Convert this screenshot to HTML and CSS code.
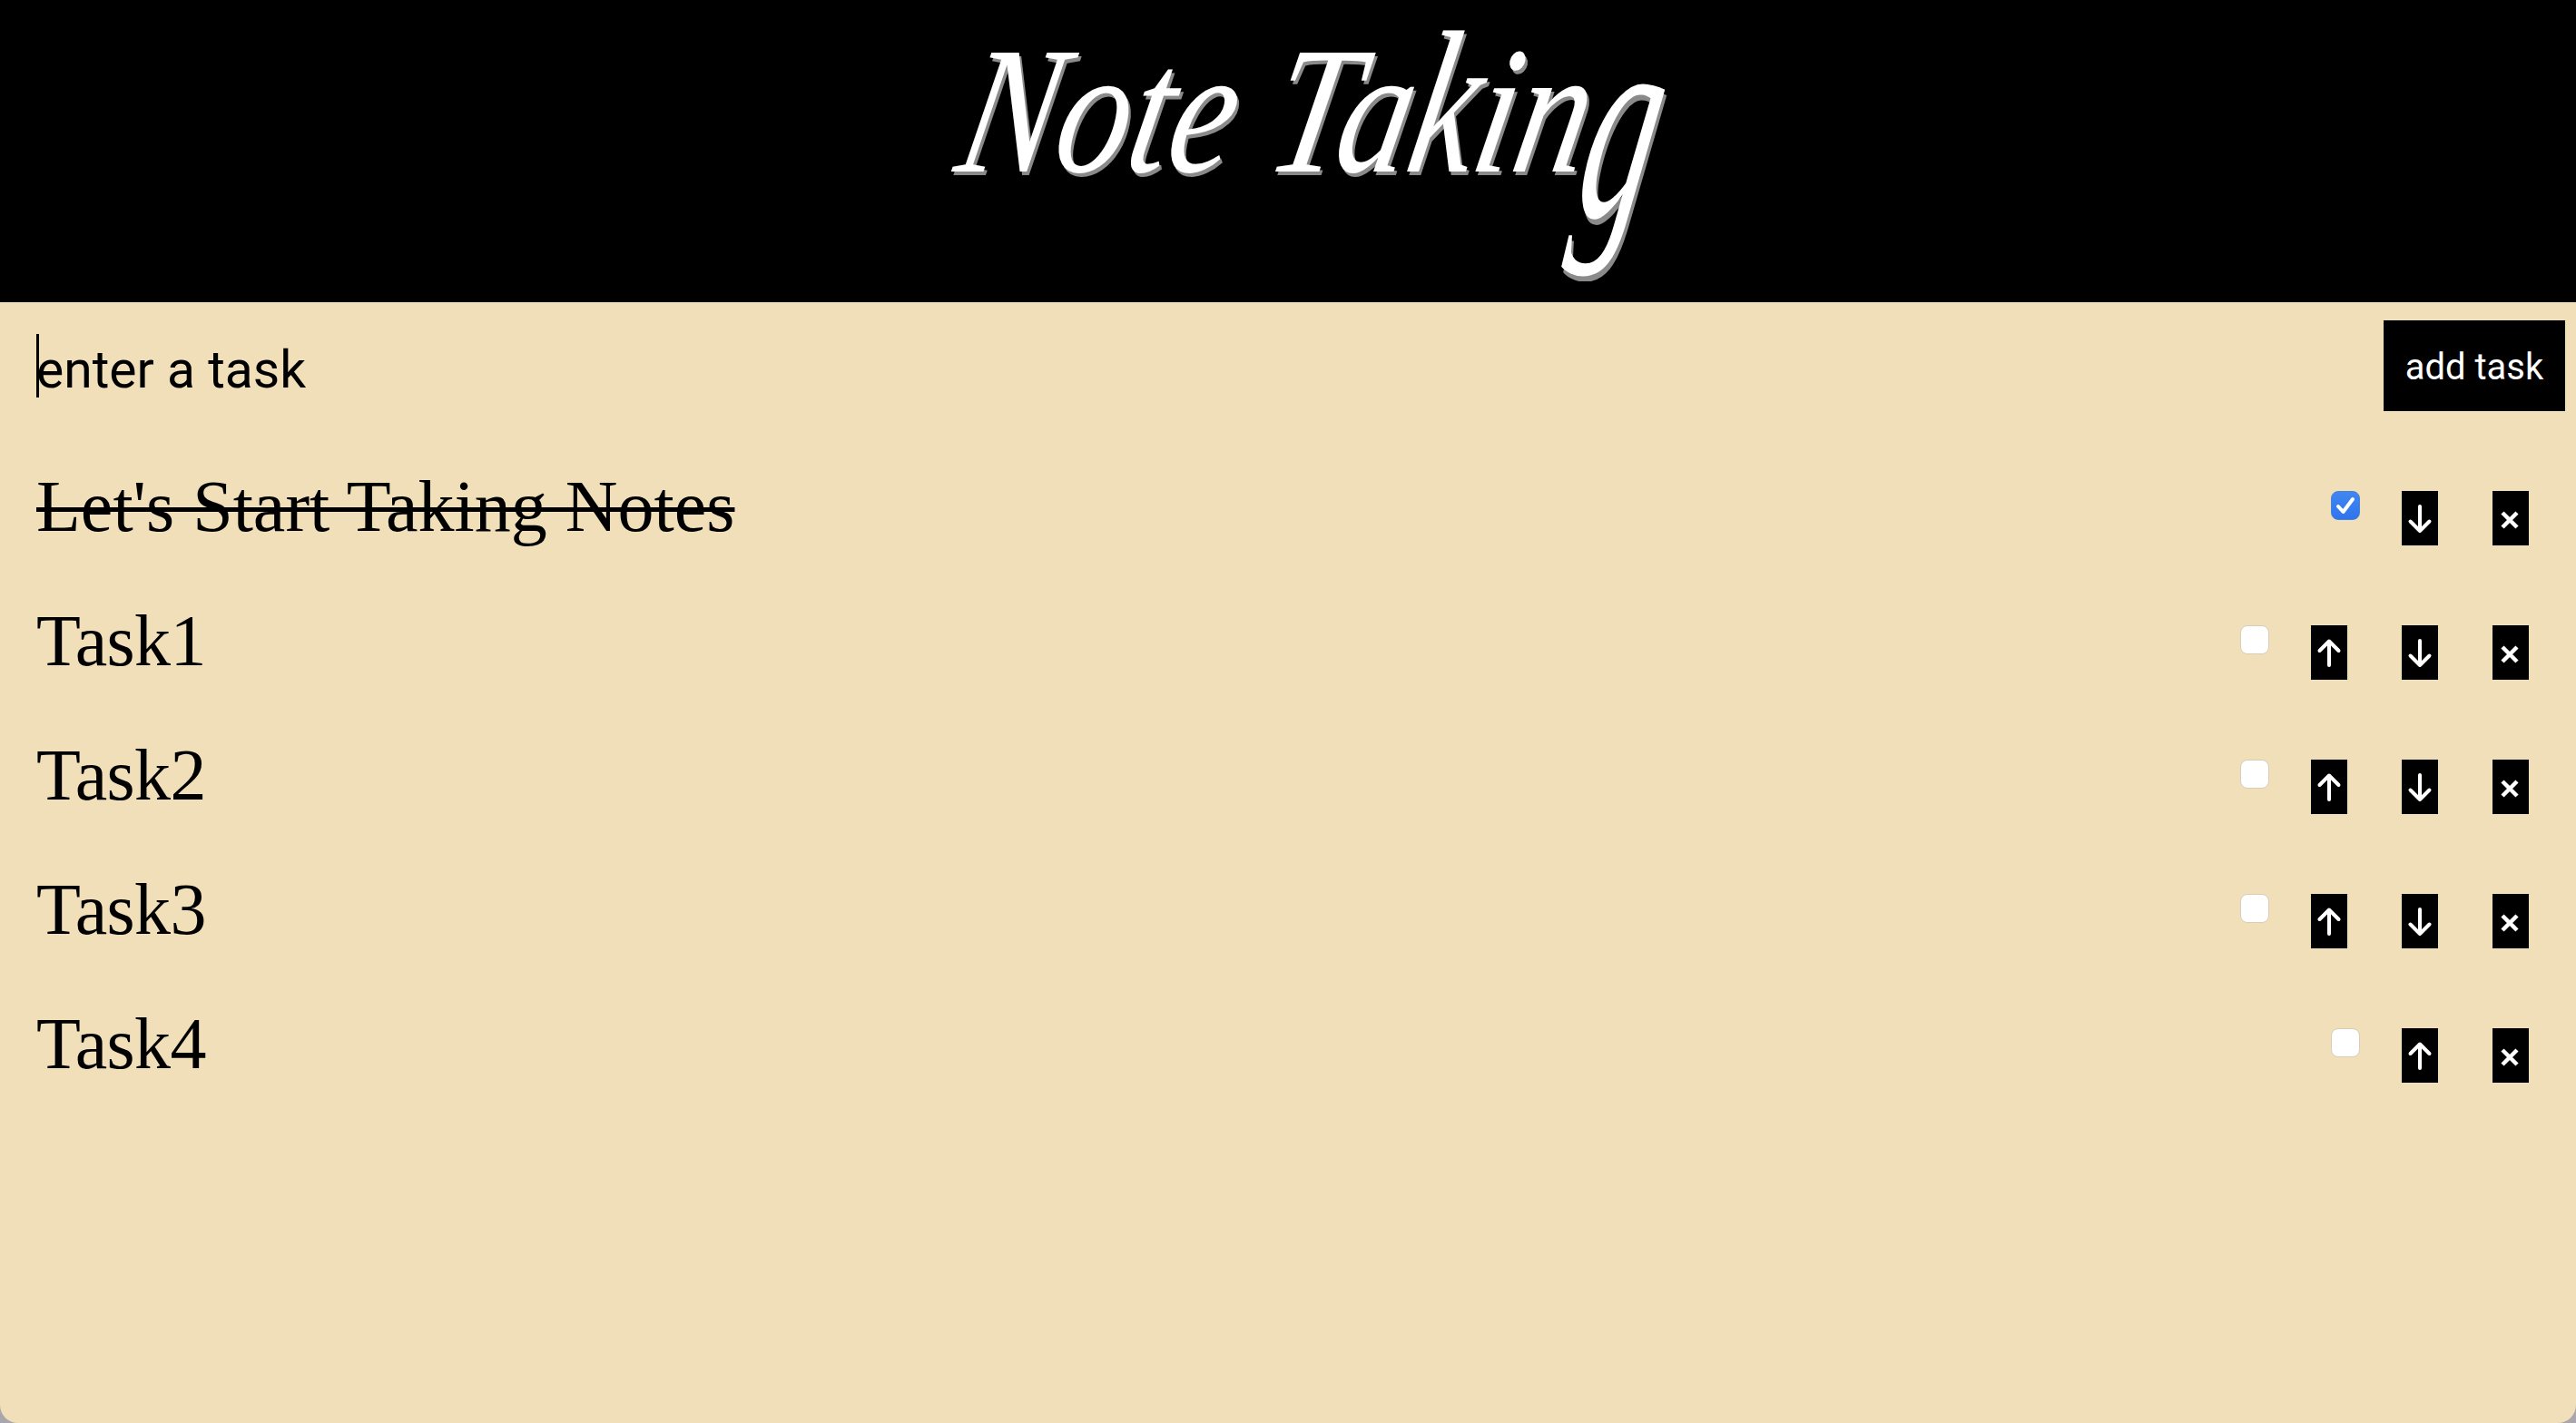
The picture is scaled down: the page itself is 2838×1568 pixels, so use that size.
FILE: index.html
```html
<!DOCTYPE html>
<html lang="en">
<head>
<meta charset="utf-8">
<title>Note Taking</title>
<link rel="stylesheet" href="styles.css">
</head>
<body>
<div class="app">
  <header class="banner"><h1 class="title">Note Ta<span class="tall">k</span>in<span class="deep">g</span></h1></header>
  <form class="entry">
    <div class="field">
      <span class="caret"></span>
      <input class="task-input" type="text" placeholder="enter a task">
    </div>
    <button class="add" type="button">add task</button>
  </form>
  <ul class="tasks">
    <li class="task">
      <span class="label done">Let's Start Taking Notes</span>
      <div class="controls">
        <label class="check"><input type="checkbox" checked><svg class="tick" viewBox="0 0 32 32"><path d="M8 17 L13.5 23 L24 9"/></svg></label>
        <button class="ctl" type="button"><svg viewBox="0 0 40 60"><path d="M20 17 V44 M9.500 33.500 L20 44 L30.500 33.500"/></svg></button>
        <button class="ctl" type="button"><svg viewBox="0 0 40 60"><path class="x" d="M11 24 L27 40 M27 24 L11 40"/></svg></button>
      </div>
    </li>
    <li class="task">
      <span class="label">Task1</span>
      <div class="controls">
        <label class="check"><input type="checkbox"></label>
        <button class="ctl" type="button"><svg viewBox="0 0 40 60"><path d="M20 44 V17.500 M9.500 28 L20 17.500 L30.500 28"/></svg></button>
        <button class="ctl" type="button"><svg viewBox="0 0 40 60"><path d="M20 17 V44 M9.500 33.500 L20 44 L30.500 33.500"/></svg></button>
        <button class="ctl" type="button"><svg viewBox="0 0 40 60"><path class="x" d="M11 24 L27 40 M27 24 L11 40"/></svg></button>
      </div>
    </li>
    <li class="task">
      <span class="label">Task2</span>
      <div class="controls">
        <label class="check"><input type="checkbox"></label>
        <button class="ctl" type="button"><svg viewBox="0 0 40 60"><path d="M20 44 V17.500 M9.500 28 L20 17.500 L30.500 28"/></svg></button>
        <button class="ctl" type="button"><svg viewBox="0 0 40 60"><path d="M20 17 V44 M9.500 33.500 L20 44 L30.500 33.500"/></svg></button>
        <button class="ctl" type="button"><svg viewBox="0 0 40 60"><path class="x" d="M11 24 L27 40 M27 24 L11 40"/></svg></button>
      </div>
    </li>
    <li class="task">
      <span class="label">Task3</span>
      <div class="controls">
        <label class="check"><input type="checkbox"></label>
        <button class="ctl" type="button"><svg viewBox="0 0 40 60"><path d="M20 44 V17.500 M9.500 28 L20 17.500 L30.500 28"/></svg></button>
        <button class="ctl" type="button"><svg viewBox="0 0 40 60"><path d="M20 17 V44 M9.500 33.500 L20 44 L30.500 33.500"/></svg></button>
        <button class="ctl" type="button"><svg viewBox="0 0 40 60"><path class="x" d="M11 24 L27 40 M27 24 L11 40"/></svg></button>
      </div>
    </li>
    <li class="task">
      <span class="label">Task4</span>
      <div class="controls">
        <label class="check"><input type="checkbox"></label>
        <button class="ctl" type="button"><svg viewBox="0 0 40 60"><path d="M20 44 V17.500 M9.500 28 L20 17.500 L30.500 28"/></svg></button>
        <button class="ctl" type="button"><svg viewBox="0 0 40 60"><path class="x" d="M11 24 L27 40 M27 24 L11 40"/></svg></button>
      </div>
    </li>
  </ul>
</div>
</body>
</html>
```
FILE: styles.css
```css
* { box-sizing: border-box; }
html, body { margin: 0; height: 100%; background: #a9a7ad; }
.app {
  height: 1568px;
  background: #f0dfb8;
  border-radius: 0 0 20px 20px;
  display: flex;
  flex-direction: column;
}
.banner {
  height: 333px;
  background: #000;
  display: flex;
  justify-content: center;
  flex: none;
}
.title {
  margin: 0;
  font: italic 400 200px/243px "Liberation Serif", serif;
  color: #fff;
  text-shadow: 4px 4px 0 #8a8a8a;
  white-space: nowrap;
  transform: translateX(20px) scaleX(0.8) skewX(-14deg);
}
.tall, .deep {
  display: inline-block;
  line-height: 1.2;
}
.tall { transform: scaleY(1.12); transform-origin: 50% 187px; }
.deep { transform: scaleY(1.55); transform-origin: 50% 97px; }
.entry {
  display: flex;
  align-items: center;
  padding: 20px 12px 0 40px;
  flex: none;
}
.field { position: relative; flex: 1; padding-top: 8px; }
.caret {
  position: absolute;
  left: 0;
  top: 5px;
  width: 3px;
  height: 70px;
  background: #000;
}
.task-input {
  display: block;
  width: 100%;
  height: 72px;
  padding: 0;
  border: 0;
  outline: 0;
  background: transparent;
  font: 57px "Roboto", sans-serif;
  color: #000;
}
.task-input::placeholder { color: #000; opacity: 1; }
.add {
  width: 200px;
  height: 100px;
  padding: 2px 0 0;
  border: 0;
  background: #000;
  color: #fff;
  font: 40px "Roboto", sans-serif;
}
.tasks {
  list-style: none;
  margin: 0;
  padding: 0 22px 0 40px;
  display: flex;
  flex-direction: column;
}
.task {
  height: 148px;
  display: flex;
  justify-content: space-between;
  align-items: flex-start;
}
.task:first-child { margin-top: 88px; }
.label {
  font: 80px/92px "Liberation Serif", serif;
  letter-spacing: -0.6px;
  color: #000;
  margin-top: -29px;
}
.done { letter-spacing: 0; text-decoration: line-through; text-decoration-thickness: 5px; }
.controls { display: flex; align-items: flex-start; }
.check { position: relative; display: block; width: 32px; height: 32px; margin-right: 16px; }
.check input {
  appearance: none;
  display: block;
  margin: 0;
  width: 32px;
  height: 32px;
  border-radius: 8px;
  background: #fff;
  border: 1px solid #d8cdb6;
}
.check input:checked {
  background: linear-gradient(#4187f0, #2f74ee);
  border: 1px solid #4a82d8;
}
.tick { position: absolute; inset: 0; width: 32px; height: 32px; }
.tick path { fill: none; stroke: #fff; stroke-width: 4px; stroke-linecap: round; stroke-linejoin: round; }
.ctl {
  width: 40px;
  height: 60px;
  margin: 0 30px;
  padding: 0;
  border: 0;
  background: #000;
  display: block;
}
.ctl svg { display: block; width: 40px; height: 60px; }
.ctl path { fill: none; stroke: #fff; stroke-width: 4px; stroke-linecap: round; stroke-linejoin: round; }
.ctl .x { stroke-width: 4.5px; stroke-linecap: butt; }
```
